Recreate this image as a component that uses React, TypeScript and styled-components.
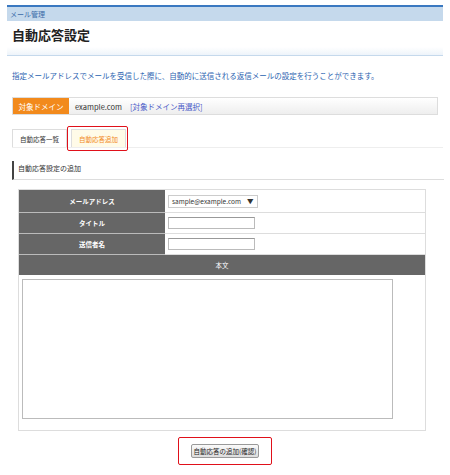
import React from "react";
import styled, { createGlobalStyle } from "styled-components";

const G = createGlobalStyle`
  body { margin:0; background:#fff; font-family:"Noto Sans CJK JP","Liberation Sans",sans-serif; }
`;
const Page = styled.div`width:450px;height:475px;padding:5px 7px 0;box-sizing:border-box;`;
const Crumb = styled.div`border-top:2px solid #3a78c0;background:#c5d9ec;height:14px;font-size:7px;color:#3a6aa8;line-height:14px;padding-left:3px;`;
const Title = styled.h1`margin:0;font-size:13px;font-weight:bold;color:#222;padding:5px 5px 3px;line-height:18px;`;
const Band = styled.div`height:8px;background:linear-gradient(#fff,#eef4fa);border-bottom:1px solid #c5d9ec;`;
const Desc = styled.p`margin:0;padding:14px 5px 0;font-size:7.5px;color:#2a62b0;line-height:12px;`;
const Domain = styled.div`margin:15px 5px 0;height:16px;border:1px solid #ddd;background:linear-gradient(#fff,#eee);display:flex;align-items:center;font-size:7.5px;`;
const DLabel = styled.div`background:#f28a1c;color:#fff;height:100%;width:56px;display:flex;align-items:center;justify-content:center;`;
const DText = styled.span`margin-left:6px;color:#333;`;
const DLink = styled.span`margin-left:8px;color:#4a5ac8;`;
const Tabs = styled.div`margin:10px 0 0 5px;display:flex;gap:4px;border-bottom:1px solid #eee;width:431px;height:22px;align-items:flex-end;`;
const Tab = styled.div<{ $on?: boolean }>`height:17px;padding:0 7px;display:flex;align-items:center;font-size:6.5px;border:1px solid #ddd;border-bottom:none;
  color:${p => p.$on ? "#f28a1c" : "#333"};background:${p => p.$on ? "#fffbe8" : "#fff"};position:relative;
  ${p => p.$on ? "&::after{content:'';position:absolute;left:-5px;top:-4px;right:-3px;bottom:-4px;border:1.5px solid #e0101a;border-radius:2px;}" : ""}`;
const Section = styled.div`margin:13px 0 0 5px;width:426px;height:15px;border-left:2px solid #444;padding-left:4px;font-size:7px;color:#333;line-height:15px;border-bottom:1px solid #ddd;padding-bottom:3px;`;
const Table = styled.div`margin:9px 0 0 11px;width:406px;border:1px solid #ddd;display:grid;grid-template-columns:146px 1fr;`;
const Label = styled.div`background:#666;color:#fff;font-size:6.5px;display:flex;align-items:center;justify-content:center;border-bottom:1px solid #bbb;font-weight:bold;`;
const Cell = styled.div<{ $h: number }>`height:${p => p.$h}px;border-bottom:1px solid #ddd;display:flex;align-items:center;padding-left:3px;`;
const Sel = styled.div`border:1px solid #ccc;font-size:6.5px;color:#333;padding:1px 3px;height:9px;display:flex;align-items:center;gap:6px;`;
const Inp = styled.div`width:85px;height:10px;border:1px solid #bbb;border-top-color:#999;`;
const Head = styled.div`grid-column:1/3;height:20px;background:#666;color:#fff;font-size:6.5px;display:flex;align-items:center;justify-content:center;`;
const Body = styled.div`grid-column:1/3;height:155px;padding:4px 0 0 3px;box-sizing:border-box;`;
const Area = styled.div`width:369px;height:138px;border:1px solid #bbb;`;
const Foot = styled.div`display:flex;justify-content:center;margin-top:6px;`;
const BtnWrap = styled.div`border:1.5px solid #e0101a;border-radius:2px;padding:6px 12px;`;
const Btn = styled.div`font-size:6.5px;color:#222;border:1px solid #999;border-radius:2px;background:linear-gradient(#fafafa,#ddd);padding:1px 2px;`;

export default function App() {
  return (
    <Page>
      <G />
      <Crumb>メール管理</Crumb>
      <Title>自動応答設定</Title>
      <Band />
      <Desc>指定メールアドレスでメールを受信した際に、自動的に送信される返信メールの設定を行うことができます。</Desc>
      <Domain>
        <DLabel>対象ドメイン</DLabel>
        <DText>example.com</DText>
        <DLink>[対象ドメイン再選択]</DLink>
      </Domain>
      <Tabs>
        <Tab>自動応答一覧</Tab>
        <Tab $on>自動応答追加</Tab>
      </Tabs>
      <Section>自動応答設定の追加</Section>
      <Table>
        <Label>メールアドレス</Label>
        <Cell $h={22}><Sel>sample@example.com <span>▼</span></Sel></Cell>
        <Label>タイトル</Label>
        <Cell $h={20}><Inp /></Cell>
        <Label>送信者名</Label>
        <Cell $h={20}><Inp /></Cell>
        <Head>本文</Head>
        <Body><Area /></Body>
      </Table>
      <Foot><BtnWrap><Btn>自動応答の追加(確認)</Btn></BtnWrap></Foot>
    </Page>
  );
}
